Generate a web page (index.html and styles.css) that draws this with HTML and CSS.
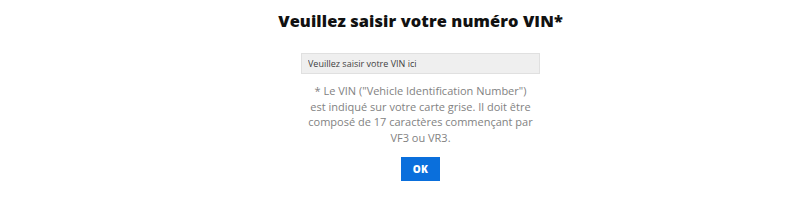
FILE: index.html
```html
<!DOCTYPE html>
<html lang="fr">
<head>
    <meta charset="UTF-8">
    <title>Numéro VIN</title>
    <link rel="stylesheet" href="styles.css">
</head>
<body>
    <div class="vinBox">
        <h1 class="vinTitle">Veuillez saisir votre numéro VIN*</h1>
        <input type="text" class="vinInput" placeholder="Veuillez saisir votre VIN ici">
        <p class="vinNote">* Le VIN ("Vehicle Identification Number")<br>est indiqué sur votre carte grise. Il doit être<br>composé de 17 caractères commençant par<br>VF3 ou VR3.</p>
        <button class="vinButton">OK</button>
    </div>
</body>
</html>
```
FILE: styles.css
```css
*{
    padding: 0px;
    margin: 0px;
    box-sizing: border-box;
}
body{
    background: #ffffff;
    font-family: "Open Sans", "Liberation Sans", sans-serif;
}
.vinBox{
    display: flex;
    flex-direction: column;
    align-items: center;
    padding-top: 8px;
    padding-left: 41px;
}
.vinTitle{
    font-size: 16.4px;
    font-weight: 800;
    color: #111111;
    height: 26px;
    line-height: 26px;
    letter-spacing: 0.1px;
}
.vinInput{
    margin-top: 19px;
    width: 239px;
    height: 21px;
    background: #efefef;
    border: 1px solid #e0e0e0;
    padding: 0 6px;
    font-family: inherit;
    font-size: 9px;
    color: #3a3a3a;
}
.vinInput::placeholder{
    color: #3f3f3f;
}
.vinNote{
    margin-top: 9px;
    text-align: center;
    font-size: 11px;
    line-height: 15.6px;
    color: #828282;
}
.vinButton{
    margin-top: 12px;
    width: 39px;
    height: 24px;
    border: none;
    background: #0a6fdc;
    color: #ffffff;
    font-family: inherit;
    font-weight: 800;
    font-size: 10px;
    letter-spacing: 0.3px;
}
```
